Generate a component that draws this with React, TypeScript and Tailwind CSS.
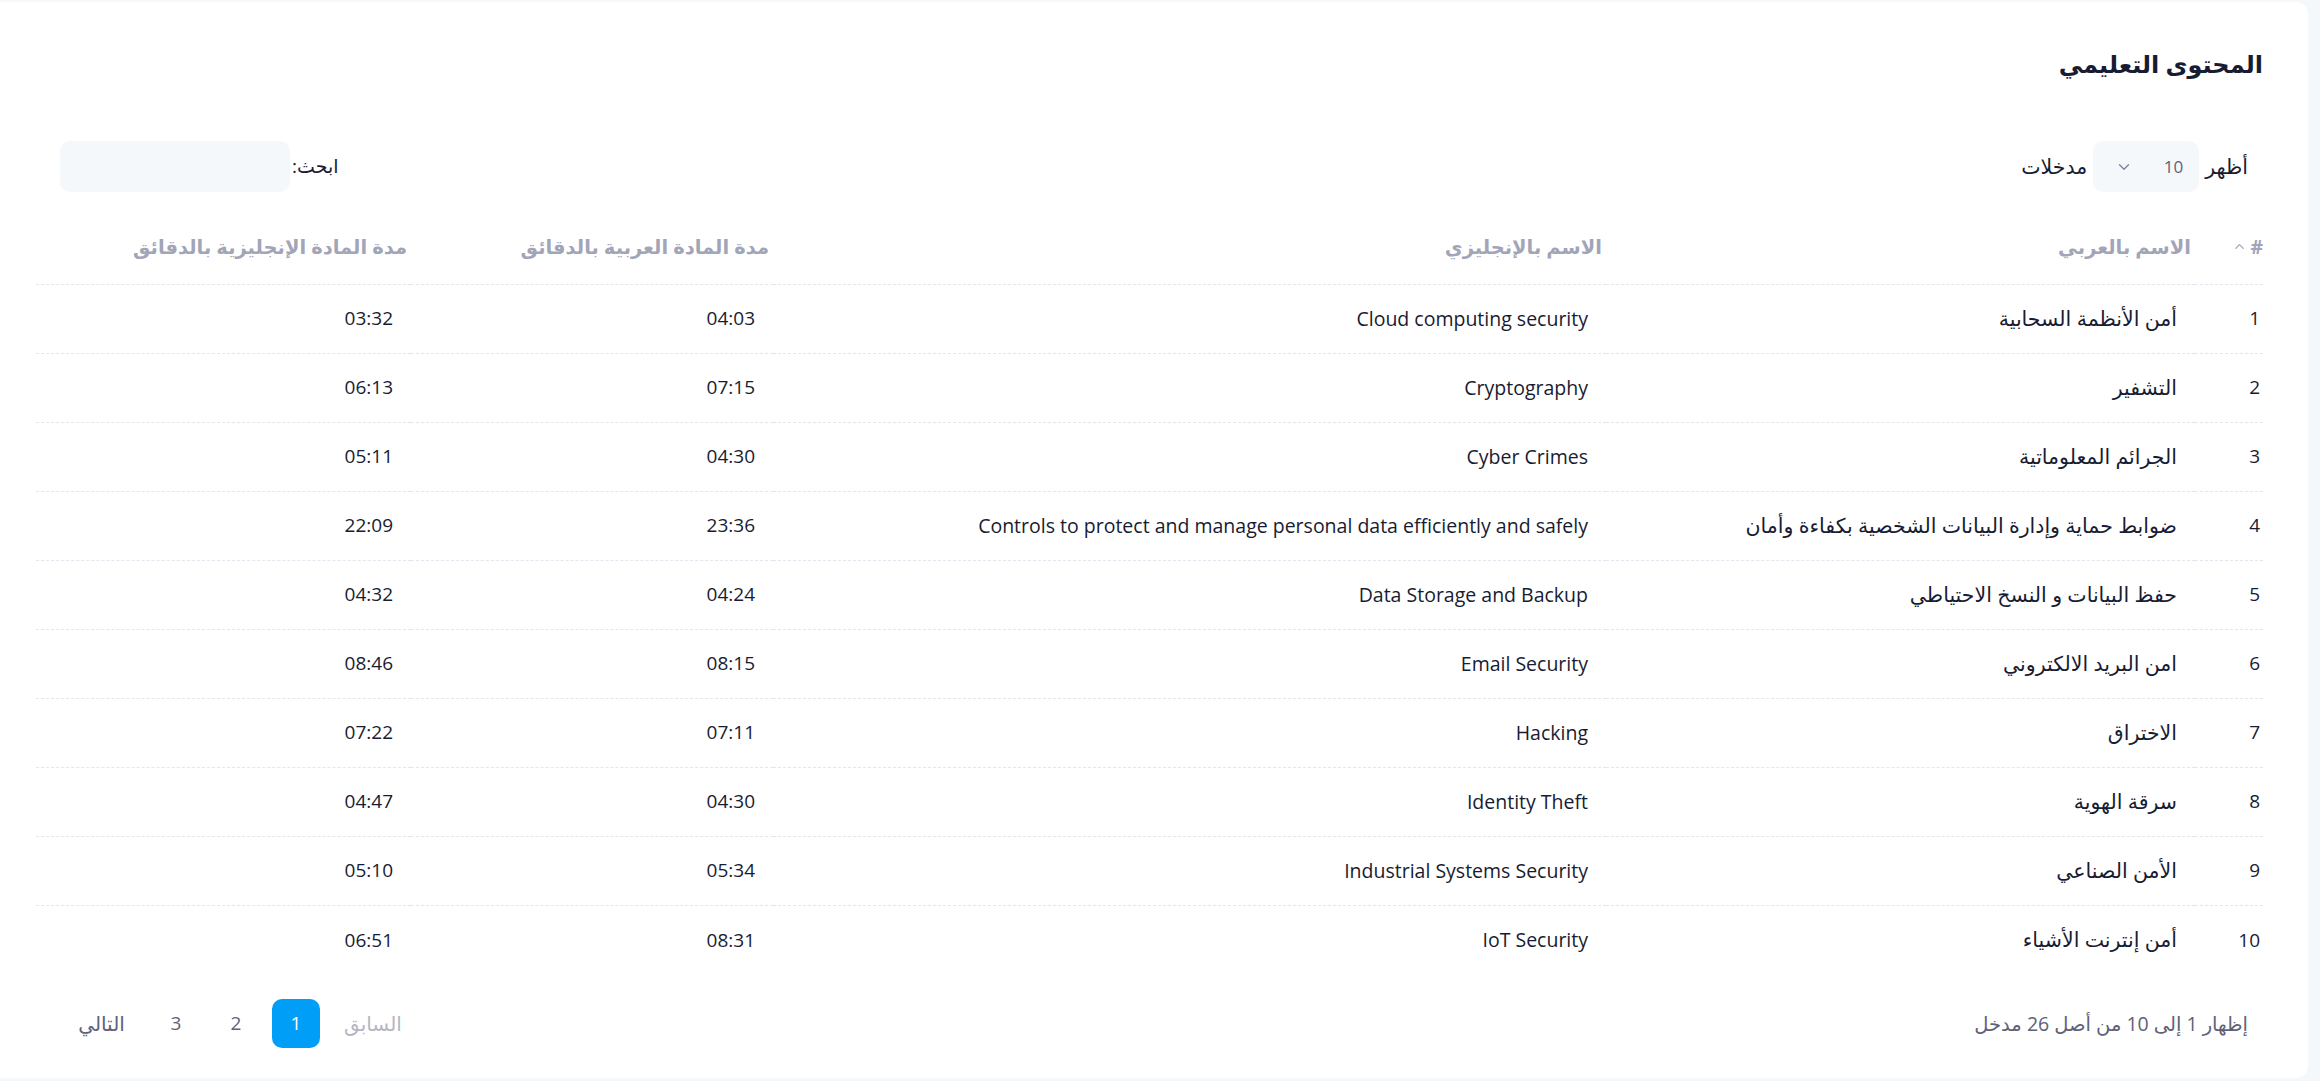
import { ChevronDown, ChevronUp } from "lucide-react";

type Row = { id: number; ar: string; en: string; arDur: string; enDur: string };

const rows: Row[] = [
  { id: 1, ar: "أمن الأنظمة السحابية", en: "Cloud computing security", arDur: "04:03", enDur: "03:32" },
  { id: 2, ar: "التشفير", en: "Cryptography", arDur: "07:15", enDur: "06:13" },
  { id: 3, ar: "الجرائم المعلوماتية", en: "Cyber Crimes", arDur: "04:30", enDur: "05:11" },
  {
    id: 4,
    ar: "ضوابط حماية وإدارة البيانات الشخصية بكفاءة وأمان",
    en: "Controls to protect and manage personal data efficiently and safely",
    arDur: "23:36",
    enDur: "22:09",
  },
  { id: 5, ar: "حفظ البيانات و النسخ الاحتياطي", en: "Data Storage and Backup", arDur: "04:24", enDur: "04:32" },
  { id: 6, ar: "امن البريد الالكتروني", en: "Email Security", arDur: "08:15", enDur: "08:46" },
  { id: 7, ar: "الاختراق", en: "Hacking", arDur: "07:11", enDur: "07:22" },
  { id: 8, ar: "سرقة الهوية", en: "Identity Theft", arDur: "04:30", enDur: "04:47" },
  { id: 9, ar: "الأمن الصناعي", en: "Industrial Systems Security", arDur: "05:34", enDur: "05:10" },
  { id: 10, ar: "أمن إنترنت الأشياء", en: "IoT Security", arDur: "08:31", enDur: "06:51" },
];

const font = "font-['Open_Sans','DejaVu_Sans',sans-serif]";

export default function App() {
  return (
    <div className={`min-h-[1081px] w-full bg-[#f5f8fa] pt-[2px] ${font}`} dir="rtl">
      <div className="mr-[12px] flex h-[1076px] flex-col rounded-r-xl bg-white pb-[30px] pl-[36px] pr-[45px] pt-[46px]">
        {/* title */}
        <h3 className="h-[32px] text-[24px] font-semibold leading-[32px] text-[#181c32]">المحتوى التعليمي</h3>

        {/* length + search */}
        <div className="mt-[61px] flex h-[51px] items-center justify-between pl-[24px] pr-[15px]">
          <label className="flex items-center gap-[6px] text-[20.5px] text-[#181c32]">
            <span>أظهر</span>
            <span className="flex h-[51px] w-[106px] items-center justify-between rounded-[10px] bg-[#f5f8fa] pl-[22px] pr-[16px] text-[17px] text-[#5e6278]">
              <span>10</span>
              <ChevronDown className="h-[18px] w-[18px] text-[#7e8299]" strokeWidth={1.75} />
            </span>
            <span>مدخلات</span>
          </label>
          <label className="flex items-center gap-[2px] text-[19px] text-[#181c32]">
            <span>ابحث:</span>
            <span className="block h-[51px] w-[230px] rounded-[10px] bg-[#f5f8fa]" />
          </label>
        </div>

        {/* table */}
        <table className="mt-[20px] w-full table-fixed border-collapse text-[19.5px] text-[#181c32]">
          <colgroup>
            <col className="w-[68px]" />
            <col className="w-[589px]" />
            <col className="w-[833px]" />
            <col className="w-[362px]" />
            <col className="w-[375px]" />
          </colgroup>
          <thead>
            <tr className="h-[72px] border-b border-dashed border-[#e4e6ef] text-[19.5px] font-bold text-[#a1a5b7]">
              <th className="pb-[3px] pr-0 text-right font-bold">
                <span className="inline-flex items-center gap-[3px]">
                  #
                  <ChevronUp className="h-[15px] w-[15px]" strokeWidth={2} />
                </span>
              </th>
              <th className="pb-[3px] pr-[4px] text-right font-bold">الاسم بالعربي</th>
              <th className="pb-[3px] pr-[4px] text-right font-bold">الاسم بالإنجليزي</th>
              <th className="pb-[3px] pr-[4px] text-right font-bold">مدة المادة العربية بالدقائق</th>
              <th className="pb-[3px] pr-[4px] text-right font-bold">مدة المادة الإنجليزية بالدقائق</th>
            </tr>
          </thead>
          <tbody>
            {rows.map((r, i) => (
              <tr
                key={r.id}
                className={i < rows.length - 1 ? "h-[69px] border-b border-dashed border-[#e4e6ef]" : "h-[69px]"}
              >
                <td className="pr-[3px] text-right text-[19px]">{r.id}</td>
                <td className="pr-[18px] text-right text-[20.5px]">{r.ar}</td>
                <td className="pr-[18px] text-right">{r.en}</td>
                <td className="pr-[18px] text-right text-[19px]">{r.arDur}</td>
                <td className="pr-[18px] text-right text-[19px]">{r.enDur}</td>
              </tr>
            ))}
          </tbody>
        </table>

        {/* footer */}
        <div className="mt-[25px] flex h-[49px] items-center justify-between pl-[27px] pr-[15px]">
          <div className="text-[19.5px] text-[#5e6278]">إظهار 1 إلى 10 من أصل 26 مدخل</div>
          <div className="flex items-center gap-[12px] text-[20px] font-normal">
            <span className="flex h-[49px] items-center px-[12px] text-[#b5b5c3]">السابق</span>
            <span className="flex h-[49px] w-[48px] items-center justify-center rounded-[10px] bg-[#009ef7] text-[19px] text-white">
              1
            </span>
            <span className="flex h-[49px] w-[48px] items-center justify-center text-[19px] text-[#5e6278]">2</span>
            <span className="flex h-[49px] w-[48px] items-center justify-center text-[19px] text-[#5e6278]">3</span>
            <span className="flex h-[49px] w-[77px] items-center justify-center text-[#5e6278]">التالي</span>
          </div>
        </div>
      </div>
    </div>
  );
}
